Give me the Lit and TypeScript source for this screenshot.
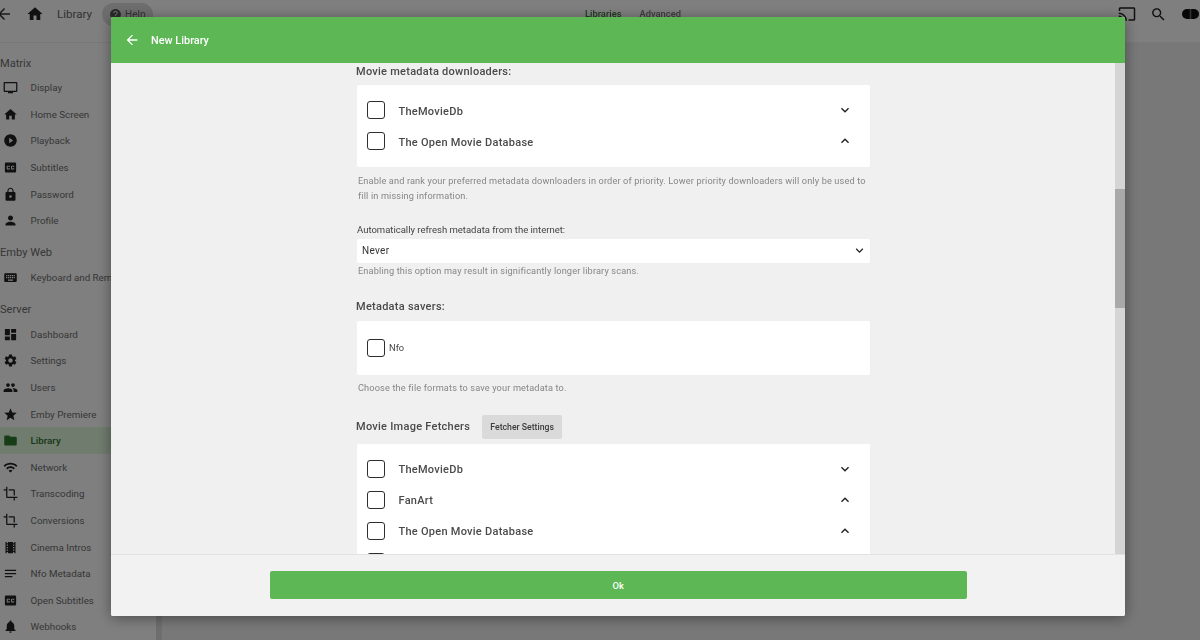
import { LitElement, html, css, svg } from "lit";
import { customElement } from "lit/decorators.js";

const P: Record<string, string> = {
  back: "M20 11H7.83l5.59-5.59L12 4l-8 8 8 8 1.41-1.41L7.83 13H20v-2z",
  home: "M10 20v-6h4v6h5v-8h3L12 3 2 12h3v8z",
  help: "M12 2C6.48 2 2 6.48 2 12s4.48 10 10 10 10-4.48 10-10S17.52 2 12 2zm1 17h-2v-2h2v2zm2.07-7.75l-.9.92C13.45 12.9 13 13.5 13 15h-2v-.5c0-1.1.45-2.1 1.17-2.83l1.24-1.26c.37-.36.59-.86.59-1.41 0-1.1-.9-2-2-2s-2 .9-2 2H8c0-2.21 1.79-4 4-4s4 1.79 4 4c0 .88-.36 1.68-.93 2.25z",
  tv: "M21 3H3c-1.1 0-2 .9-2 2v12c0 1.1.9 2 2 2h5v2h8v-2h5c1.1 0 1.99-.9 1.99-2L23 5c0-1.1-.9-2-2-2zm0 14H3V5h18v12z",
  play: "M12 2C6.48 2 2 6.48 2 12s4.48 10 10 10 10-4.48 10-10S17.52 2 12 2zm-2 14.5v-9l6 4.5-6 4.5z",
  cc: "M19 4H5c-1.11 0-2 .9-2 2v12c0 1.1.89 2 2 2h14c1.1 0 2-.9 2-2V6c0-1.1-.9-2-2-2zm-8 7H9.5v-.5h-2v3h2V13H11v1c0 .55-.45 1-1 1H7c-.55 0-1-.45-1-1v-4c0-.55.45-1 1-1h3c.55 0 1 .45 1 1v1zm7 0h-1.5v-.5h-2v3h2V13H18v1c0 .55-.45 1-1 1h-3c-.55 0-1-.45-1-1v-4c0-.55.45-1 1-1h3c.55 0 1 .45 1 1v1z",
  lock: "M18 8h-1V6c0-2.76-2.24-5-5-5S7 3.24 7 6v2H6c-1.1 0-2 .9-2 2v10c0 1.1.9 2 2 2h12c1.1 0 2-.9 2-2V10c0-1.1-.9-2-2-2zm-6 9c-1.1 0-2-.9-2-2s.9-2 2-2 2 .9 2 2-.9 2-2 2zm3.1-9H8.9V6c0-1.71 1.39-3.1 3.1-3.1 1.71 0 3.1 1.39 3.1 3.1v2z",
  person: "M12 12c2.21 0 4-1.79 4-4s-1.79-4-4-4-4 1.79-4 4 1.79 4 4 4zm0 2c-2.67 0-8 1.34-8 4v2h16v-2c0-2.66-5.33-4-8-4z",
  keyboard: "M20 5H4c-1.1 0-1.99.9-1.99 2L2 17c0 1.1.9 2 2 2h16c1.1 0 2-.9 2-2V7c0-1.1-.9-2-2-2zm-9 3h2v2h-2V8zm0 3h2v2h-2v-2zM8 8h2v2H8V8zm0 3h2v2H8v-2zm-1 2H5v-2h2v2zm0-3H5V8h2v2zm9 7H8v-2h8v2zm0-4h-2v-2h2v2zm0-3h-2V8h2v2zm3 3h-2v-2h2v2zm0-3h-2V8h2v2z",
  dashboard: "M3 13h8V3H3v10zm0 8h8v-6H3v6zm10 0h8V11h-8v10zm0-18v6h8V3h-8z",
  settings: "M19.14 12.94c.04-.3.06-.61.06-.94 0-.32-.02-.64-.07-.94l2.03-1.58c.18-.14.23-.41.12-.61l-1.92-3.32c-.12-.22-.37-.29-.59-.22l-2.39.96c-.5-.38-1.03-.7-1.62-.94l-.36-2.54c-.04-.24-.24-.41-.48-.41h-3.84c-.24 0-.43.17-.47.41l-.36 2.54c-.59.24-1.13.57-1.62.94l-2.39-.96c-.22-.08-.47 0-.59.22L2.74 8.87c-.12.21-.08.47.12.61l2.03 1.58c-.05.3-.09.63-.09.94s.02.64.07.94l-2.03 1.58c-.18.14-.23.41-.12.61l1.92 3.32c.12.22.37.29.59.22l2.39-.96c.5.38 1.03.7 1.62.94l.36 2.54c.05.24.24.41.48.41h3.84c.24 0 .44-.17.47-.41l.36-2.54c.59-.24 1.13-.56 1.62-.94l2.39.96c.22.08.47 0 .59-.22l1.92-3.32c.12-.22.07-.47-.12-.61l-2.01-1.58zM12 15.6c-1.98 0-3.6-1.62-3.6-3.6s1.62-3.6 3.6-3.6 3.6 1.62 3.6 3.6-1.62 3.6-3.6 3.6z",
  people: "M16 11c1.66 0 2.99-1.34 2.99-3S17.66 5 16 5c-1.66 0-3 1.34-3 3s1.34 3 3 3zm-8 0c1.66 0 2.99-1.34 2.99-3S9.66 5 8 5C6.34 5 5 6.34 5 8s1.34 3 3 3zm0 2c-2.33 0-7 1.17-7 3.5V19h14v-2.5c0-2.33-4.67-3.5-7-3.5zm8 0c-.29 0-.62.02-.97.05 1.16.84 1.97 1.97 1.97 3.45V19h6v-2.5c0-2.33-4.67-3.5-7-3.5z",
  star: "M12 17.27L18.18 21l-1.64-7.03L22 9.24l-7.19-.61L12 2 9.19 8.63 2 9.24l5.46 4.73L5.82 21z",
  folder: "M10 4H4c-1.1 0-1.99.9-1.99 2L2 18c0 1.1.9 2 2 2h16c1.1 0 2-.9 2-2V8c0-1.1-.9-2-2-2h-8l-2-2z",
  wifi: "M1 9l2 2c4.97-4.97 13.03-4.97 18 0l2-2C16.93 2.93 7.08 2.93 1 9zm8 8l3 3 3-3c-1.65-1.66-4.34-1.66-6 0zm-4-4l2 2c2.76-2.76 7.24-2.76 10 0l2-2C15.14 9.14 8.87 9.14 5 13z",
  crop: "M17 15h2V7c0-1.1-.9-2-2-2H9v2h8v8zM7 17V1H5v4H1v2h4v10c0 1.1.9 2 2 2h10v4h2v-4h4v-2H7z",
  movie: "M18 3v2h-2V3H8v2H6V3H4v18h2v-2h2v2h8v-2h2v2h2V3h-2zM8 17H6v-2h2v2zm0-4H6v-2h2v2zm0-4H6V7h2v2zm10 8h-2v-2h2v2zm0-4h-2v-2h2v2zm0-4h-2V7h2v2z",
  notes: "M3 18h12v-2H3v2zM3 6v2h18V6H3zm0 7h18v-2H3v2z",
  bell: "M12 22c1.1 0 2-.9 2-2h-4c0 1.1.89 2 2 2zm6-6v-5c0-3.07-1.64-5.64-4.5-6.32V4c0-.83-.67-1.5-1.5-1.5s-1.5.67-1.5 1.5v.68C7.63 5.36 6 7.92 6 11v5l-2 2v1h16v-1l-2-2z",
  cast: "M21 3H3c-1.1 0-2 .9-2 2v3h2V5h18v14h-7v2h7c1.1 0 2-.9 2-2V5c0-1.1-.9-2-2-2zM1 18v3h3c0-1.66-1.34-3-3-3zm0-4v2c2.76 0 5 2.24 5 5h2c0-3.87-3.13-7-7-7zm0-4v2c4.97 0 9 4.03 9 9h2c0-6.08-4.93-11-11-11z",
  search: "M15.5 14h-.79l-.28-.27C15.41 12.59 16 11.11 16 9.5 16 5.91 13.09 3 9.5 3S3 5.91 3 9.5 5.91 16 9.5 16c1.61 0 3.09-.59 4.23-1.57l.27.28v.79l5 4.99L20.49 19l-4.99-5zm-6 0C7.01 14 5 11.99 5 9.5S7.01 5 9.5 5 14 7.01 14 9.5 11.99 14 9.5 14z",
  more: "M16.59 8.59L12 13.17 7.41 8.59 6 10l6 6 6-6z",
  less: "M12 8l-6 6 1.41 1.41L12 10.83l4.59 4.58L18 14z",
};

const icon = (n: string, cls = "") =>
  html`<svg class="ic ${cls}" viewBox="0 0 24 24">${svg`<path d=${P[n]}></path>`}</svg>`;

type Item = { i: string; t: string; on?: boolean };
const NAV: { title: string; items: Item[] }[] = [
  { title: "Matrix", items: [
    { i: "tv", t: "Display" }, { i: "home", t: "Home Screen" }, { i: "play", t: "Playback" },
    { i: "cc", t: "Subtitles" }, { i: "lock", t: "Password" }, { i: "person", t: "Profile" } ] },
  { title: "Emby Web", items: [{ i: "keyboard", t: "Keyboard and Remote" }] },
  { title: "Server", items: [
    { i: "dashboard", t: "Dashboard" }, { i: "settings", t: "Settings" }, { i: "people", t: "Users" },
    { i: "star", t: "Emby Premiere" }, { i: "folder", t: "Library", on: true }, { i: "wifi", t: "Network" },
    { i: "crop", t: "Transcoding" }, { i: "crop", t: "Conversions" }, { i: "movie", t: "Cinema Intros" },
    { i: "notes", t: "Nfo Metadata" }, { i: "cc", t: "Open Subtitles" }, { i: "bell", t: "Webhooks" } ] },
];

@customElement("app-root")
export class AppRoot extends LitElement {
  static styles = css`
    :host { display: block; width: 1200px; height: 640px; overflow: hidden; position: relative;
      font-family: Roboto, "Liberation Sans", sans-serif; background: #f0f0f0; color: #6a6a6a; }
    * { box-sizing: border-box; }
    .ic { display: block; fill: currentColor; flex: none; }
    .soft { position: absolute; inset: 0; filter: blur(0.3px); }

    .page { width: 1200px; height: 640px; display: flex; flex-direction: column; }
    .top { height: 43px; flex: none; display: flex; align-items: center; border-bottom: 1px solid #f0f0f0;
      padding-bottom: 15px; position: relative; background: #fff; }
    .top .ic { color: #222; width: 18px; height: 18px; }
    .top .backic { margin-left: -5px; color: #333; }
    .top .homeic { margin-left: 13px; }
    .crumb { margin-left: 13px; font-size: 11.6px; color: #666; }
    .helpbtn { margin-left: 10px; display: flex; align-items: center; gap: 3px; width: 51px; height: 23px;
      padding-left: 7px; border-radius: 12px; background: #dcdcdc; font-size: 10px; color: #666; flex: none; margin-top: 1px; }
    .helpbtn .ic { width: 13px; height: 13px; color: #555; }
    .tabs { display: flex; gap: 18px; font-size: 9.4px; font-weight: 500; position: absolute; left: 585px; top: 8px; color: #777; }
    .tabs .act { color: #3a7a3a; }
    .topr { margin-left: auto; display: flex; align-items: center; margin-top: 1px; }
    .topr .cast { width: 18px; height: 18px; margin-right: 14px; margin-left: -1px; }
    .topr .search { width: 17px; height: 17px; margin-right: 15px; }
    .avatar { width: 17px; height: 10px; border-radius: 5px; margin-right: 1px;
      background: linear-gradient(90deg, #111 42%, #666 50%, #111 58%); }

    .body { flex: 1; display: flex; min-height: 0; }
    .side { width: 156px; flex: none; overflow: hidden; padding-top: 7.5px; background: #fff; }
    .bar { width: 6px; flex: none; background: #dcdcdc; }
    .gt { height: 24px; line-height: 25px; font-size: 11.1px; color: #6e6e6e; margin-top: 6.2px; white-space: nowrap; }
    .gt:first-child { margin-top: 0; }
    .it { height: 26.6px; display: flex; align-items: center; font-size: 9.8px; padding-left: 3px; white-space: nowrap; color: #6e6e6e; }
    .it .ic { width: 15px; height: 15px; color: #222; margin-right: 12.5px; }
    .it.on { background: #e0f8dc; color: #2f6f2f; font-weight: 500; }
    .it.on .ic { color: #2f7a2f; }

    .scrim { position: absolute; inset: 0; background: rgba(0, 0, 0, 0.5); }

    .dialog { position: absolute; left: 111px; top: 17px; width: 1014px; height: 599px; background: #f0f0f0;
      display: flex; flex-direction: column; border-radius: 2px; overflow: hidden;
      box-shadow: 0 2px 14px rgba(0, 0, 0, 0.4); }
    .dh { height: 46px; flex: none; background: #5cb754; color: #fff; display: flex; align-items: center; padding-left: 13px; }
    .dh .ic { width: 16px; height: 16px; }
    .dh b { margin-left: 11px; font-size: 10.9px; font-weight: 500; }
    .mid { flex: 1; min-height: 0; display: flex; }
    .scroll { flex: 1; overflow: hidden; padding: 2px 0 0 245px; color: #333; }
    .col { width: 514px; display: flex; flex-direction: column; }
    .sbar { width: 10px; flex: none; background: #d5d5d5; padding-top: 126px; }
    .thumb { height: 119px; background: #a9a9a9; }
    .lab { font-size: 11px; font-weight: 500; color: #4a4a4a; line-height: 14px; letter-spacing: 0.26px; }
    .card { background: #fff; border-radius: 2px; margin-left: 1px; }
    .rows { padding: 9.5px 17px 10px 10px; }
    .row { height: 31px; display: flex; align-items: center; }
    .cb { width: 18px; height: 18px; border: 1.5px solid #2e2e2e; border-radius: 3px; flex: none; }
    .row span { margin-left: 13.5px; padding-top: 2px; font-size: 11px; font-weight: 500; color: #4a4a4a; flex: 1; letter-spacing: 0.26px; }
    .row .ic { width: 16px; height: 16px; color: #222; margin-right: 0; }
    .hint { font-size: 9.2px; line-height: 15px; color: #868686; padding-left: 2px; letter-spacing: 0.14px; }
    .sublab { font-size: 9.5px; color: #444; line-height: 12px; padding-left: 1px; }
    .select { height: 24px; background: #fff; border-radius: 2px; margin-left: 1px; display: flex; align-items: center;
      padding: 0 3px 0 5px; font-size: 10px; color: #333; justify-content: space-between; letter-spacing: 0.3px; }
    .select .ic { width: 15px; height: 15px; color: #222; }
    .nfo { height: 54px; display: flex; align-items: center; padding-left: 10px; }
    .nfo span { margin-left: 4px; font-size: 9.3px; color: #444; }
    .fhead { display: flex; align-items: center; gap: 12px; }
    .fbtn { height: 24px; width: 80px; background: #dadada; border-radius: 2px; font-size: 8.7px; font-weight: 500; color: #3c3c3c;
      display: flex; align-items: center; justify-content: center; }
    .second { margin-top: 5.5px; padding-top: 9px; }
    .first { margin-top: 6px; }
    .df { height: 62px; flex: none; background: #f2f2f2; border-top: 1px solid #e2e2e2; padding: 16px 158.5px 0 159px; }
    .ok { height: 28px; background: #5cb754; border-radius: 2px; color: #fff; font-size: 9.4px; font-weight: 500;
      display: flex; align-items: center; justify-content: center; }
  `;

  private row(t: string, up = false) {
    return html`<div class="row"><div class="cb"></div><span>${t}</span>${icon(up ? "less" : "more")}</div>`;
  }

  render() {
    return html`
      <div class="soft">
      <div class="page">
        <div class="top">
          ${icon("back", "backic")}${icon("home", "homeic")}
          <div class="crumb">Library</div>
          <div class="helpbtn">${icon("help")}Help</div>
          <div class="tabs"><span class="act">Libraries</span><span>Advanced</span></div>
          <div class="topr">${icon("cast", "cast")}${icon("search", "search")}<div class="avatar"></div></div>
        </div>
        <div class="body">
          <div class="side">
            ${NAV.map((g) => html`<div class="gt">${g.title}</div>
              ${g.items.map((it) => html`<div class="it ${it.on ? "on" : ""}">${icon(it.i)}${it.t}</div>`)}`)}
          </div>
          <div class="bar"></div>
        </div>
      </div>
      <div class="scrim"></div>
      <div class="dialog">
        <div class="dh">${icon("back")}<b>New Library</b></div>
        <div class="mid">
          <div class="scroll"><div class="col">
            <div class="lab">Movie metadata downloaders:</div>
            <div class="card rows first">${this.row("TheMovieDb")}${this.row("The Open Movie Database", true)}</div>
            <div class="hint" style="margin-top:6px">Enable and rank your preferred metadata downloaders in order of priority. Lower priority downloaders will only be used to fill in missing information.</div>
            <div class="sublab" style="margin-top:21px">Automatically refresh metadata from the internet:</div>
            <div class="select" style="margin-top:3px">Never${icon("more")}</div>
            <div class="hint" style="margin-top:0">Enabling this option may result in significantly longer library scans.</div>
            <div class="lab" style="margin-top:22px">Metadata savers:</div>
            <div class="card nfo" style="margin-top:7px"><div class="cb"></div><span>Nfo</span></div>
            <div class="hint" style="margin-top:5px">Choose the file formats to save your metadata to.</div>
            <div class="fhead" style="margin-top:20px"><div class="lab">Movie Image Fetchers</div><div class="fbtn">Fetcher Settings</div></div>
            <div class="card rows second">${this.row("TheMovieDb")}${this.row("FanArt", true)}${this.row("The Open Movie Database", true)}${this.row("")}</div>
          </div></div>
          <div class="sbar"><div class="thumb"></div></div>
        </div>
        <div class="df"><div class="ok">Ok</div></div>
      </div>
      </div>
    `;
  }
}
